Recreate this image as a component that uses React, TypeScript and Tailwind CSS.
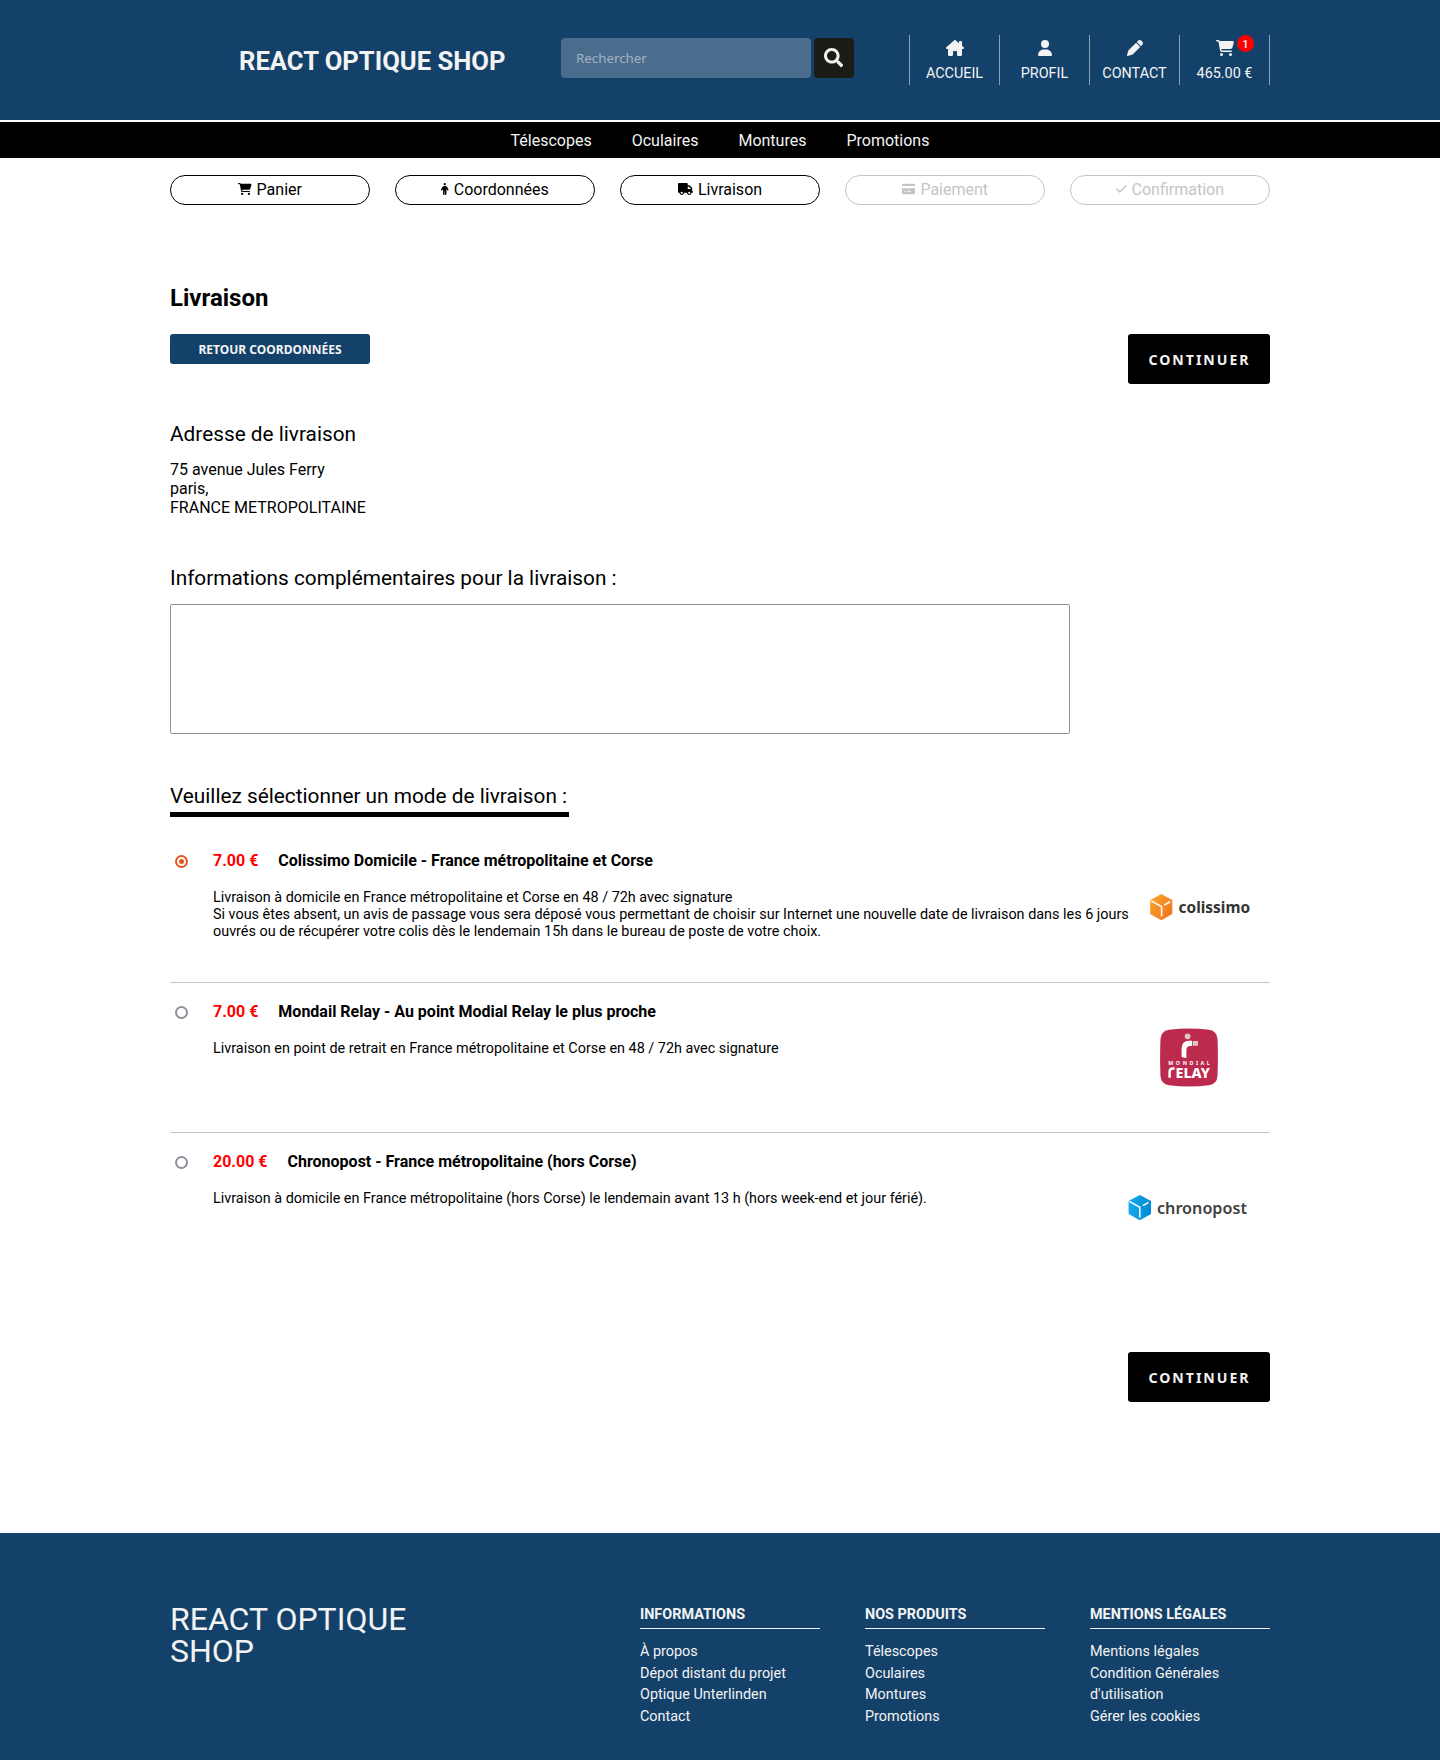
import type { ReactNode } from 'react';
import { FaSearch } from 'react-icons/fa';
import {
  FaCartShopping,
  FaCheck,
  FaCreditCard,
  FaHouseChimney,
  FaPen,
  FaPerson,
  FaTruck,
  FaUser,
} from 'react-icons/fa6';

function HeaderItem({ icon, label, badge }: { icon: ReactNode; label: string; badge?: number }) {
  return (
    <a className="relative flex h-[50px] w-[90px] flex-col items-center border-r border-[#8aa1b5] pt-[5px] text-[14.4px] text-[#f3f3f3]">
      <span className="flex h-4 items-center">{icon}</span>
      <span className="mt-[9px] leading-[18px]">{label}</span>
      {badge !== undefined && (
        <span className="absolute top-0 right-[15px] h-[17px] w-[17px] rounded-full bg-[#ff0000] text-center text-[11.2px] leading-[19px] font-medium text-white">
          {badge}
        </span>
      )}
    </a>
  );
}

function Step({ icon, label, done }: { icon: ReactNode; label: string; done: boolean }) {
  return (
    <div
      className={`flex h-[30px] w-[200px] items-center justify-center gap-[5px] rounded-full border ${
        done ? 'border-black text-black' : 'border-[#c5c5c5] text-[#c5c5c5]'
      }`}
    >
      <span className="-mt-[3px]">{icon}</span>
      <span className="-mt-0.5 leading-[27px]">{label}</span>
    </div>
  );
}

function ContinueButton() {
  return (
    <button className="h-[50px] w-[142px] rounded-[3px] bg-black pt-[2px] pl-px font-['Noto_Sans',sans-serif] text-[14.1px] font-bold tracking-[2px] text-[#f3f3f3]">
      CONTINUER
    </button>
  );
}

function ColissimoLogo() {
  return (
    <svg width="120" height="40" viewBox="0 0 120 40" className="block">
      <defs>
        <linearGradient id="orange" x1="0" y1="0" x2="1" y2="1">
          <stop offset="0" stopColor="#fba630" />
          <stop offset="1" stopColor="#f0701a" />
        </linearGradient>
      </defs>
      <path d="M11.3 7 L22.3 13 V27 L11.3 33.2 L0.2 27 V13 Z" fill="url(#orange)" />
      <path d="M1 13.6 L11.6 19.6 V29.5 M14.3 18 L20.2 14.8" fill="none" stroke="#fff" strokeWidth="1.6" />
      <text x="28.6" y="26" textLength="71.5" lengthAdjust="spacingAndGlyphs" fontFamily="Noto Sans, sans-serif" fontWeight="700" fontSize="16" fill="#333">
        colissimo
      </text>
    </svg>
  );
}

function MondialRelayLogo() {
  return (
    <svg width="58" height="59" viewBox="0 0 58 59" className="block">
      <path d="M9 1.8 Q29 -0.8 49 1.8 Q57 3 57.5 11 Q58.3 29 57.5 48 Q57 56 49 57.2 Q29 60 9 57.2 Q1 56 0.5 48 Q-0.3 29 0.5 11 Q1 3 9 1.8 Z" fill="#bc2a4d" />
      <circle cx="27.6" cy="8.3" r="2.9" fill="#dcc9bd" />
      <path d="M21.6 29 V20.5 Q21.8 12.8 29 12.8 H32.2 V18 H30.2 Q26.6 18 26.4 22 V30.3 Z" fill="#fff" />
      <rect x="33" y="13" width="5" height="4.7" fill="#dcc9bd" />
      <text x="8.3" y="37" textLength="41.5" fontFamily="Noto Sans, sans-serif" fontWeight="700" fontSize="5.3" fill="#fff">
        MONDIAL
      </text>
      <path d="M9.6 49.8 V44 Q9.6 40.6 12.6 40.6 H14.6" fill="none" stroke="#fff" strokeWidth="2.5" />
      <text x="15.5" y="49.8" textLength="34.5" lengthAdjust="spacingAndGlyphs" fontFamily="Noto Sans, sans-serif" fontWeight="800" fontSize="14" fill="#fff">
        ELAY
      </text>
    </svg>
  );
}

function ChronopostLogo() {
  return (
    <svg width="122" height="40" viewBox="0 0 122 40" className="block">
      <defs>
        <linearGradient id="blue" x1="0" y1="0" x2="1" y2="0">
          <stop offset="0" stopColor="#16aaed" />
          <stop offset="1" stopColor="#0088d4" />
        </linearGradient>
      </defs>
      <path d="M11.8 7 L23 13 V26 L11.8 32.2 L0.6 26 V13 Z" fill="url(#blue)" />
      <path d="M1.3 13.4 L11.8 19.3 V29.5 M15 17.6 L20.6 14.3" fill="none" stroke="#fff" strokeWidth="1.5" />
      <text x="29" y="25.5" textLength="90" lengthAdjust="spacingAndGlyphs" fontFamily="Noto Sans, sans-serif" fontWeight="600" fontSize="16" fill="#414141">
        chronopost
      </text>
    </svg>
  );
}

interface OptionProps {
  price: string;
  title: string;
  lines: string[];
  checked?: boolean;
  first?: boolean;
  last?: boolean;
  logo: ReactNode;
}

function ShippingOption({ price, title, lines, checked, first, last, logo }: OptionProps) {
  return (
    <label
      className={`flex items-start ${first ? 'h-[151px]' : 'h-[150px]'} ${last ? '' : 'border-b border-[#c5c5c5]'}`}
    >
      <span
        className={`mt-[23px] ml-[5px] flex h-[13px] w-[13px] shrink-0 items-center justify-center rounded-full border-2 ${
          checked ? 'border-[#e95420]' : 'border-[#8f8f9d]'
        }`}
      >
        {checked && <span className="h-[5px] w-[5px] rounded-full bg-[#e95420]" />}
      </span>
      <span className="ml-[25px] w-[920px] shrink-0 pt-[19px]">
        <span className="flex gap-5 leading-[19px] font-bold">
          <span className="text-[#ff0000]">{price}</span>
          <span>{title}</span>
        </span>
        <span className="mt-[19px] block text-[14.4px] leading-[17px]">
          {lines.map((line) => (
            <span key={line} className="block">
              {line}
            </span>
          ))}
        </span>
      </span>
      {logo}
    </label>
  );
}

const footerColumns = [
  { title: 'INFORMATIONS', links: ['À propos', 'Dépot distant du projet', 'Optique Unterlinden', 'Contact'] },
  { title: 'NOS PRODUITS', links: ['Télescopes', 'Oculaires', 'Montures', 'Promotions'] },
  { title: 'MENTIONS LÉGALES', links: ['Mentions légales', "Condition Générales d'utilisation", 'Gérer les cookies'] },
];

export default function App() {
  return (
    <div className="flex h-[1760px] w-full flex-col overflow-hidden bg-white font-[Roboto,sans-serif] text-base text-black">
      <header className="h-[122px] shrink-0 border-b-2 border-white bg-[#144169]">
        <div className="mx-auto flex h-[120px] w-[1100px] items-center">
          <h2 className="mt-[2px] ml-[69px] w-[322px] text-[25.6px] leading-[30px] font-bold whitespace-nowrap text-[#f3f3f3]">
            REACT OPTIQUE SHOP
          </h2>
          <div className="-mt-1 flex gap-[3px]">
            <input
              className="h-10 w-[250px] rounded bg-[#4b6d8d] px-[15px] font-['Noto_Sans',sans-serif] text-[13.33px] placeholder:text-[#a2b3c3]"
              placeholder="Rechercher"
            />
            <button className="flex h-10 w-10 items-center justify-center rounded bg-[#1b1b18] pr-px text-[#f3f3f3]">
              <FaSearch size={19.2} />
            </button>
          </div>
          <nav className="ml-auto flex border-l border-[#8aa1b5]">
            <HeaderItem icon={<FaHouseChimney className="h-4 w-[18px]" />} label="ACCUEIL" />
            <HeaderItem icon={<FaUser className="h-4 w-[14px]" />} label="PROFIL" />
            <HeaderItem icon={<FaPen className="h-4 w-4" />} label="CONTACT" />
            <HeaderItem icon={<FaCartShopping className="h-4 w-[18px]" />} label="465.00 €" badge={1} />
          </nav>
        </div>
      </header>

      <nav className="flex h-9 shrink-0 items-center justify-center gap-10 bg-black pt-px leading-[25px] text-[#f3f3f3]">
        <a>Télescopes</a>
        <a>Oculaires</a>
        <a>Montures</a>
        <a>Promotions</a>
      </nav>

      <main className="mx-auto flex h-[1375px] w-[1100px] shrink-0 flex-col">
        <div className="mt-[17px] flex justify-between">
          <Step icon={<FaCartShopping className="h-3 w-[13.5px]" />} label="Panier" done />
          <Step icon={<FaPerson className="h-3 w-[7.5px]" />} label="Coordonnées" done />
          <Step icon={<FaTruck className="h-3 w-[15px]" />} label="Livraison" done />
          <Step icon={<FaCreditCard className="h-3 w-[13.5px]" />} label="Paiement" done={false} />
          <Step icon={<FaCheck className="h-3 w-[10.5px]" />} label="Confirmation" done={false} />
        </div>

        <h1 className="mt-[78px] text-2xl leading-[30px] font-bold">Livraison</h1>
        <div className="mt-[21px] flex items-start justify-between">
          <button className="h-[30px] w-[200px] rounded-[3px] bg-[#144169] pt-[2px] font-['Noto_Sans',sans-serif] text-[12px] font-bold text-[#f3f3f3]">
            RETOUR COORDONNÉES
          </button>
          <ContinueButton />
        </div>

        <h2 className="mt-[38px] text-[20.8px] leading-6">Adresse de livraison</h2>
        <p className="mt-[14px] leading-[19px]">
          75 avenue Jules Ferry
          <br />
          paris,
          <br />
          FRANCE METROPOLITAINE
        </p>

        <h2 className="mt-[49px] text-[20.8px] leading-6">Informations complémentaires pour la livraison :</h2>
        <textarea className="mt-[14px] h-[130px] w-[900px] shrink-0 resize-none rounded-[2px] border border-[#8f8f9d] bg-white" />

        <h2 className="mt-[50px] h-[33px] w-[399px] shrink-0 border-b-5 border-black text-[20.8px] leading-6 whitespace-nowrap">
          Veuillez sélectionner un mode de livraison :
        </h2>

        <div className="mt-[15px] flex flex-col">
          <ShippingOption
            first
            checked
            price="7.00 €"
            title="Colissimo Domicile - France métropolitaine et Corse"
            lines={[
              'Livraison à domicile en France métropolitaine et Corse en 48 / 72h avec signature',
              'Si vous êtes absent, un avis de passage vous sera déposé vous permettant de choisir sur Internet une nouvelle date de livraison dans les 6 jours',
              'ouvrés ou de récupérer votre colis dès le lendemain 15h dans le bureau de poste de votre choix.',
            ]}
            logo={
              <span className="mt-[55px] ml-[17px]">
                <ColissimoLogo />
              </span>
            }
          />
          <ShippingOption
            price="7.00 €"
            title="Mondail Relay - Au point Modial Relay le plus proche"
            lines={['Livraison en point de retrait en France métropolitaine et Corse en 48 / 72h avec signature']}
            logo={
              <span className="mt-[45px] ml-[27px]">
                <MondialRelayLogo />
              </span>
            }
          />
          <ShippingOption
            last
            price="20.00 €"
            title="Chronopost - France métropolitaine (hors Corse)"
            lines={['Livraison à domicile en France métropolitaine (hors Corse) le lendemain avant 13 h (hors week-end et jour férié).']}
            logo={
              <span className="mt-[55px] -ml-[5px]">
                <ChronopostLogo />
              </span>
            }
          />
        </div>

        <div className="mt-[69px] flex justify-end">
          <ContinueButton />
        </div>
      </main>

      <footer className="flex-1 bg-[#144169] text-[#f3f3f3]">
        <div className="mx-auto flex w-[1100px] items-start justify-between pt-[70px]">
          <h2 className="w-[270px] text-[32px] leading-8">REACT OPTIQUE SHOP</h2>
          <div className="flex gap-[45px]">
            {footerColumns.map((column) => (
              <section key={column.title} className="w-[180px] text-[14.4px]">
                <h3 className="h-[26px] border-b border-[#f3f3f3] pt-[3px] leading-[17px] font-bold">{column.title}</h3>
                <ul className="mt-3 leading-[21.6px]">
                  {column.links.map((link) => (
                    <li key={link}>{link}</li>
                  ))}
                </ul>
              </section>
            ))}
          </div>
        </div>
      </footer>
    </div>
  );
}
